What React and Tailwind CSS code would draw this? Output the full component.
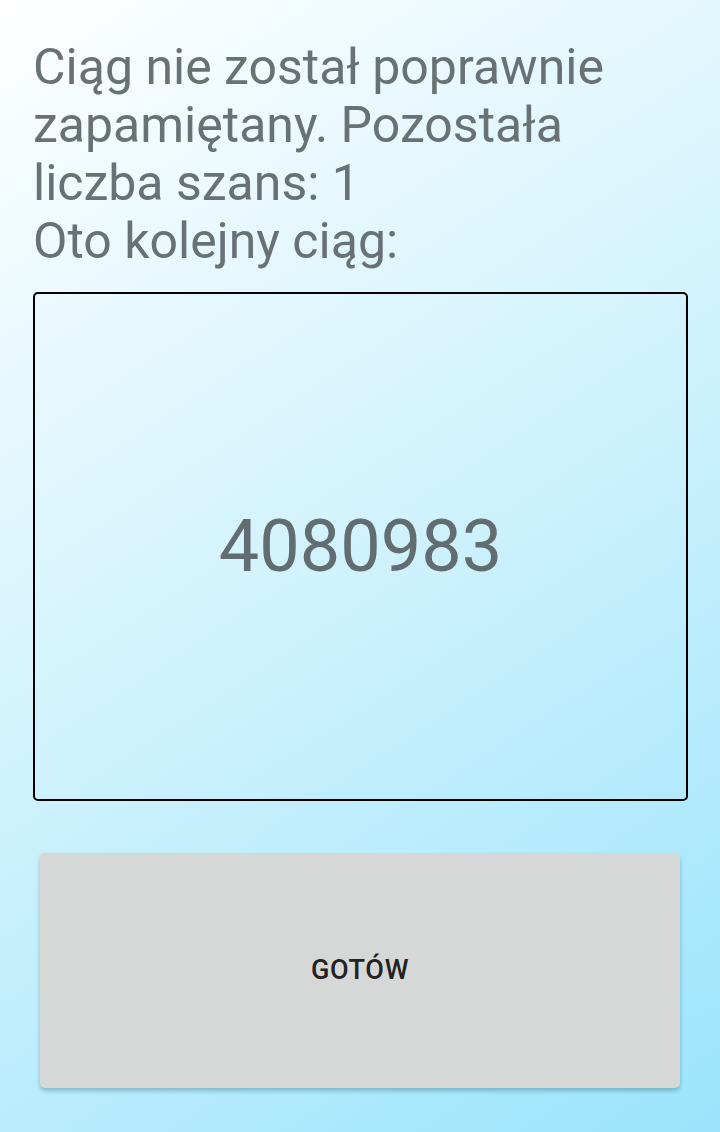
export default function App() {
  return (
    <div className="min-h-[1132px] w-[720px] bg-[linear-gradient(147deg,#ffffff_0%,#cff2fd_50%,#9be4fb_100%)] px-[33px] pt-[38px] font-['Roboto',sans-serif]">
      <p className="text-[50px] leading-[58px] text-[#687275]">
        Ciąg nie został poprawnie zapamiętany. Pozostała liczba szans: 1
        <br />
        Oto kolejny ciąg:
      </p>

      <div className="mt-[22px] flex h-[509px] w-[655px] items-center justify-center rounded-[5px] border-2 border-black">
        <span className="text-[72px] text-[#626d71]">4080983</span>
      </div>

      <div className="mt-[52px] px-[7px]">
        <button
          type="button"
          className="flex h-[235px] w-[640px] items-center justify-center rounded-[5px] bg-[#d6d8d8] text-[27px] font-medium tracking-wide text-[#222] shadow-[0_3px_4px_rgba(40,90,110,0.35)]"
        >
          GOTÓW
        </button>
      </div>
    </div>
  )
}
